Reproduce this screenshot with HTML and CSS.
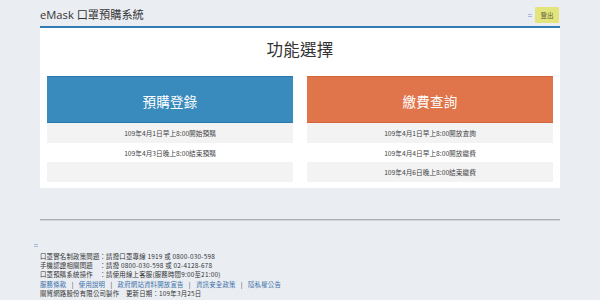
FILE: index.html
```html
<!DOCTYPE html>
<html lang="zh-Hant">
<head>
<meta charset="utf-8">
<title>eMask 口罩預購系統</title>
<link rel="stylesheet" href="styles.css">
</head>
<body>
<header class="topbar">
  <div class="brand">eMask 口罩預購系統</div>
  <div class="actions">
    <span class="grip"></span>
    <button class="logout">登出</button>
  </div>
</header>
<main class="panel">
  <h1 class="panel-title">功能選擇</h1>
  <div class="cards">
    <section class="card">
      <div class="card-head blue">預購登錄</div>
      <div class="row alt">109年4月1日早上8:00開始預購</div>
      <div class="row">109年4月3日晚上8:00結束預購</div>
      <div class="row alt"></div>
    </section>
    <section class="card">
      <div class="card-head orange">繳費查詢</div>
      <div class="row alt">109年4月1日早上8:00開放查詢</div>
      <div class="row">109年4月4日早上8:00開放繳費</div>
      <div class="row alt">109年4月6日晚上8:00結束繳費</div>
    </section>
  </div>
</main>
<hr class="divider">
<footer class="footer">
  <span class="grip small"></span>
  <div class="foot-lines">
    <p>口罩實名制政策問題：請撥口罩專線 1919 或 0800-030-598</p>
    <p>手機認證相關問題　：請撥 0800-030-598 或 02-4128-678</p>
    <p>口罩預購系統操作　：請使用線上客服(服務時間9:00至21:00)</p>
    <p class="links"><a>服務條款</a><span class="sep">|</span><a>使用說明</a><span class="sep">|</span><a>政府網站資料開放宣告</a><span class="sep">|</span><a>資訊安全政策</a><span class="sep">|</span><a>隱私權公告</a></p>
    <p>關貿網路股份有限公司製作　更新日期：109年3月25日</p>
  </div>
</footer>
</body>
</html>
```

FILE: styles.css
```css
* { box-sizing: border-box; }
html, body {
  margin: 0;
  padding: 0;
  background: #eaedf2;
  font-family: "Noto Sans CJK TC", "Noto Sans", sans-serif;
  color: #333;
}
.topbar {
  width: 520px;
  margin: 0 auto;
  height: 26px;
  display: flex;
  align-items: center;
  justify-content: space-between;
}
.brand {
  font-family: "Open Sans", "Noto Sans CJK TC", sans-serif;
  font-size: 11.2px;
  color: #333;
  padding-top: 2px;
}
.actions {
  display: flex;
  align-items: center;
  gap: 3px;
  margin-right: 1px;
  padding-top: 4px;
}
.grip {
  display: inline-block;
  width: 4px;
  height: 3px;
  border-top: 1px solid #a9bcd6;
  border-bottom: 1px solid #a9bcd6;
}
.logout {
  width: 24px;
  height: 16px;
  border: none;
  border-radius: 1px;
  background: #e3e47b;
  color: #5a5a3a;
  font-family: "Noto Sans CJK TC", sans-serif;
  font-size: 6.5px;
  padding: 0;
  line-height: 16px;
}
.panel {
  width: 520px;
  margin: 0 auto;
  background: #fff;
  border-top: 2px solid #2f7db3;
  padding: 0 7px 6px;
}
.panel-title {
  margin: 0;
  height: 48px;
  display: flex;
  align-items: center;
  justify-content: center;
  font-family: "Noto Sans CJK TC", sans-serif;
  font-weight: 400;
  font-size: 16.5px;
  color: #333;
  padding-bottom: 6px;
  letter-spacing: 0.3px;
}
.cards {
  display: grid;
  grid-template-columns: 1fr 1fr;
  column-gap: 14px;
}
.card-head {
  height: 47px;
  display: flex;
  align-items: center;
  justify-content: center;
  color: #fff;
  font-size: 13.5px;
  letter-spacing: 0.3px;
  padding-top: 3px;
}
.card-head.blue {
  background: #3a8bbd;
  border-top: 1px solid #2c77ab;
  border-bottom: 1px solid #2c77ab;
}
.card-head.orange {
  background: #e0744a;
  border-top: 1px solid #d3643a;
  border-bottom: 1px solid #d3643a;
}
.row {
  height: 19.7px;
  display: flex;
  align-items: center;
  justify-content: center;
  font-size: 6.7px;
  color: #444;
}
.row.alt { background: #f3f3f3; }
.divider {
  width: 520px;
  margin: 31px auto 0;
  border: none;
  height: 2px;
  background: #aab0b8;
  border-bottom: 1px solid #cfd4db;
}
.footer {
  width: 534px;
  margin: 23px auto 0;
}
.grip.small {
  display: block;
  width: 4px;
  height: 3px;
  margin-left: 1px;
  margin-bottom: 5px;
}
.foot-lines {
  padding-left: 7px;
}
.foot-lines p {
  margin: 0;
  font-size: 6.4px;
  letter-spacing: 0.22px;
  line-height: 9.2px;
  height: 9.2px;
  color: #333;
  white-space: nowrap;
}
.links a { color: #3a70a8; }
.links .sep { color: #333; margin: 0 5.2px; }
```
